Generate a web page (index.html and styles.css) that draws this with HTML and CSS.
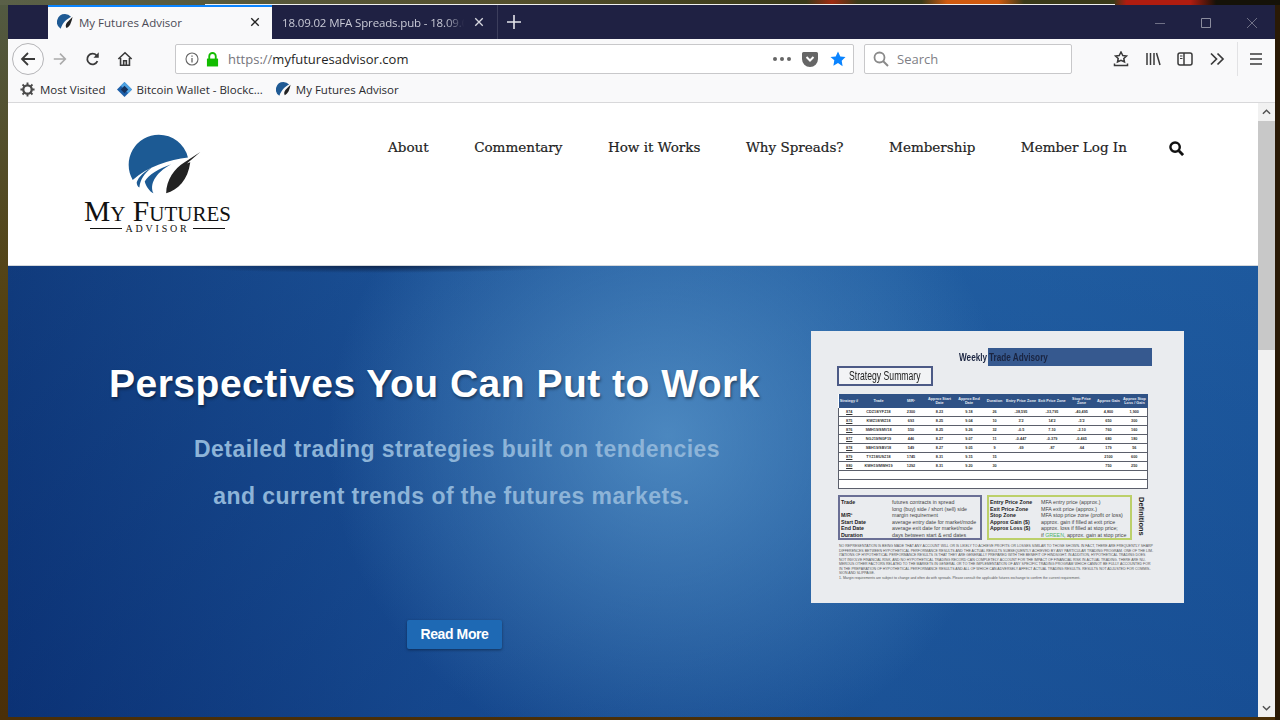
FILE: index.html
```html
<!DOCTYPE html>
<html lang="en">
<head>
    <meta charset="UTF-8">
    <title>My Futures Advisor</title>
    <link rel="stylesheet" href="styles.css">
</head>
<body>

<div class="desktop-top"><div class="desktop-line"></div></div>

<div class="window">
    <div class="tabbar">
        <div class="tab tab-active">
            <svg class="favicon" viewBox="0 0 16 16"><path fill="#1f5a94" d="M8 0a8 8 0 0 1 6 2.7C10 5 6 8 3.6 14.7A8 8 0 0 1 8 0z"/><path fill="#222" d="M15.5 3 10 8.500c-1.500 2-1.600 4-.6 5.500 3-1 5-5 6.100-11z"/></svg>
            <span class="tab-title">My Futures Advisor</span>
            <svg class="tab-close" viewBox="0 0 12 12"><path d="M1.500 1.500l9 9M10.500 1.500l-9 9" stroke="#222" stroke-width="1.600"/></svg>
        </div>
        <div class="tab tab-other">
            <span class="tab-title">18.09.02 MFA Spreads.pub - 18.09.0</span>
            <svg class="tab-close" viewBox="0 0 12 12"><path d="M1.500 1.500l9 9M10.500 1.500l-9 9" stroke="#d8d8e0" stroke-width="1.600"/></svg>
        </div>
        <div class="new-tab">
            <svg viewBox="0 0 14 14"><path d="M7 0v14M0 7h14" stroke="#e4e4ea" stroke-width="1.600"/></svg>
        </div>
        <div class="window-buttons">
            <svg viewBox="0 0 12 12"><path d="M1 6.500h10" stroke="#6f7086"/></svg>
            <svg viewBox="0 0 12 12"><path d="M1.500 1.500h9v9h-9z" fill="none" stroke="#8b8c9e"/></svg>
            <svg viewBox="0 0 12 12"><path d="M1 1l10 10M11 1L1 11" stroke="#6f7086"/></svg>
        </div>
    </div>

    <div class="toolbar">
        <div class="back-button">
            <svg viewBox="0 0 18 18"><path d="M16 9H3M9 3L3 9l6 6" fill="none" stroke="#3a3a3a" stroke-width="1.800"/></svg>
        </div>
        <svg class="tool-icon forward" viewBox="0 0 18 18"><path d="M2 9h13M9 3l6 6-6 6" fill="none" stroke="#ababab" stroke-width="1.800"/></svg>
        <svg class="tool-icon reload" viewBox="0 0 18 18"><path d="M14 11.500A6 6 0 1 1 13 5" fill="none" stroke="#3a3a3a" stroke-width="2"/><path d="M15.500 1.500v6h-6z" fill="#3a3a3a"/></svg>
        <svg class="tool-icon home" viewBox="0 0 18 18"><path d="M1.500 9 9 2l7.500 7M4 8v8h10V8M7.500 16v-5h3v5" fill="none" stroke="#3a3a3a" stroke-width="1.800"/></svg>

        <div class="urlbar">
            <svg class="url-info" viewBox="0 0 14 14"><circle cx="7" cy="7" r="6" fill="none" stroke="#666" stroke-width="1.100"/><path d="M7 6v4.500M7 3.500v1.300" stroke="#666" stroke-width="1.300"/></svg>
            <svg class="url-lock" viewBox="0 0 14 16"><path d="M1 7h12v8.500H1z" fill="#12bc00"/><path d="M3.500 7.500V4.500a3.500 3.500 0 0 1 7 0v3" fill="none" stroke="#12bc00" stroke-width="2"/></svg>
            <span class="url-text"><span class="url-scheme">https://</span>myfuturesadvisor.com</span>
            <span class="url-dots"><i></i><i></i><i></i></span>
            <svg class="url-pocket" viewBox="0 0 16 15"><path d="M1.500 0h13A1.500 1.500 0 0 1 16 1.500V7A8 8 0 0 1 0 7V1.500A1.500 1.500 0 0 1 1.500 0z" fill="#666"/><path d="M4.500 5 8 8.500 11.500 5" fill="none" stroke="#fff" stroke-width="2"/></svg>
            <svg class="url-star" viewBox="0 0 16 16"><path d="M8 .5l2.300 4.900 5.200.7-3.800 3.700.9 5.400L8 12.100l-4.600 2.600.9-5.400L.5 6.100l5.200-.7z" fill="#0a84ff"/></svg>
        </div>

        <div class="searchbar">
            <svg viewBox="0 0 16 16"><circle cx="6.500" cy="6.500" r="5" fill="none" stroke="#8a8a8a" stroke-width="1.800"/><path d="M10 10l5 5" stroke="#8a8a8a" stroke-width="2"/></svg>
            <span>Search</span>
        </div>

        <div class="tool-right">
            <svg viewBox="0 0 16 16"><path d="M8 1l1.800 3.500 3.700.5-2.700 2.500.7 3.500L8 9.300 4.500 11l.7-3.500L2.500 5l3.700-.5z" fill="none" stroke="#3a3a3a" stroke-width="1.500"/><path d="M1.500 12.500v2h13v-2" fill="none" stroke="#3a3a3a" stroke-width="1.500"/></svg>
            <svg viewBox="0 0 16 16"><path d="M2 2v12M5.500 2v12M9 2v12M11.500 2l3.500 12" fill="none" stroke="#3a3a3a" stroke-width="1.500"/></svg>
            <svg viewBox="0 0 16 16"><rect x="1" y="2" width="14" height="12" rx="2" fill="none" stroke="#3a3a3a" stroke-width="1.500"/><path d="M7 2v12" stroke="#3a3a3a" stroke-width="1.500"/><path d="M3 5h2.500M3 7.500h2.500" stroke="#3a3a3a"/></svg>
            <svg viewBox="0 0 16 16"><path d="M2 2.500 7.500 8 2 13.500M8.500 2.500 14 8l-5.500 5.500" fill="none" stroke="#3a3a3a" stroke-width="1.700"/></svg>
            <span class="tool-sep"></span>
            <svg viewBox="0 0 16 16"><path d="M2 3h12M2 8h12M2 13h12" stroke="#3a3a3a" stroke-width="1.700"/></svg>
        </div>
    </div>

    <div class="bookmarks">
        <div class="bookmark">
            <svg viewBox="0 0 16 16"><circle cx="8" cy="8" r="4.500" fill="none" stroke="#4a4a4a" stroke-width="2.400"/><path d="M8 .5v3M8 12.500v3M.5 8h3M12.500 8h3M2.700 2.700l2 2M11.300 11.300l2 2M13.300 2.700l-2 2M4.700 11.300l-2 2" stroke="#4a4a4a" stroke-width="2"/></svg>
            Most Visited
        </div>
        <div class="bookmark">
            <svg viewBox="0 0 16 16"><path d="M8 0l8 8-8 8-8-8z" fill="#1d5fa8"/><path d="M8 0l8 8-4 4-8-8z" fill="#4fa3e3"/><path d="M8 4l4 4-4 4-4-4z" fill="#17325c"/></svg>
            Bitcoin Wallet - Blockc...
        </div>
        <div class="bookmark">
            <svg viewBox="0 0 16 16"><path fill="#1f5a94" d="M8 0a8 8 0 0 1 6 2.700C10 5 6 8 3.600 14.700A8 8 0 0 1 8 0z"/><path fill="#222" d="M15.500 3 10 8.500c-1.500 2-1.600 4-.6 5.500 3-1 5-5 6.100-11z"/></svg>
            My Futures Advisor
        </div>
    </div>

    <div class="viewport">
        <div class="page">
            <header class="site-header">
                <div class="logo">
                    <svg class="logo-mark" viewBox="170 25 230 185">
                        <path fill="#1c5a94" d="M268 30A90 90 0 0 1 355 98C300 105 235 125 190 165A90 90 0 0 1 268 30z"/>
                        <path fill="#1c5a94" d="M247 128C225 140 208 155 202 172c0 8 3 13 8 16C212 165 225 145 247 128z"/>
                        <path fill="#1c5a94" d="M305 118C270 130 235 150 226 170c4 15 14 30 26 35C240 180 255 145 305 118z"/>
                        <path fill="#222" d="M392 82 345 112C315 130 290 165 290 205 325 195 355 165 362 112L352 116z"/>
                    </svg>
                    <div class="logo-name">My Futures</div>
                    <div class="logo-sub"><span></span>Advisor<span></span></div>
                </div>
                <nav class="site-nav">
                    <a>About</a>
                    <a>Commentary</a>
                    <a>How it Works</a>
                    <a>Why Spreads?</a>
                    <a>Membership</a>
                    <a>Member Log In</a>
                    <svg class="nav-search" viewBox="0 0 16 16"><circle cx="6.500" cy="6.500" r="5" fill="none" stroke="#111" stroke-width="2.600"/><path d="M10.500 10.500 15 15" stroke="#111" stroke-width="3"/></svg>
                </nav>
            </header>

            <section class="hero">
                <div class="hero-copy">
                    <h1>Perspectives You Can Put to Work</h1>
                    <p class="hero-line">Detailed trading strategies built on tendencies</p>
                    <p class="hero-line">and current trends of the futures markets.</p>
                    <a class="read-more">Read More</a>
                </div>

                <div class="sheet">
                    <div class="sheet-title"><span class="sheet-weekly"><i>Weekly</i></span><span class="sheet-band"><i>Trade Advisory</i></span></div>
                    <div class="sheet-summary"><i>Strategy Summary</i></div>
                    <table class="sheet-table">
                        <thead>
                            <tr><th>Strategy #</th><th>Trade</th><th>M/R¹</th><th>Approx Start Date</th><th>Approx End Date</th><th>Duration</th><th>Entry Price Zone</th><th>Exit Price Zone</th><th>Stop Price Zone</th><th>Approx Gain</th><th>Approx Stop Loss / Gain</th></tr>
                        </thead>
                        <tbody>
                            <tr><td><u>874</u></td><td>CDZ18/YFZ18</td><td>2300</td><td>8.23</td><td>9.18</td><td>26</td><td>-38,595</td><td>-33,795</td><td>-40,495</td><td>4,800</td><td>1,900</td></tr>
                            <tr><td><u>875</u></td><td>KWZ18/WZ18</td><td>693</td><td>8.25</td><td>9.04</td><td>10</td><td>3'2</td><td>14'2</td><td>-5'2</td><td>650</td><td>300</td></tr>
                            <tr><td><u>876</u></td><td>SMH19/SMV18</td><td>550</td><td>8.25</td><td>9.26</td><td>32</td><td>-0.5</td><td>7.10</td><td>-2.10</td><td>760</td><td>160</td></tr>
                            <tr><td><u>877</u></td><td>NGJ19/NGF19</td><td>446</td><td>8.27</td><td>9.07</td><td>11</td><td>-0.447</td><td>-0.379</td><td>-0.465</td><td>680</td><td>180</td></tr>
                            <tr><td><u>878</u></td><td>SBH19/SBV18</td><td>549</td><td>8.27</td><td>9.05</td><td>9</td><td>.69</td><td>.87</td><td>.64</td><td>179</td><td>56</td></tr>
                            <tr><td><u>879</u></td><td>TYZ18/USZ18</td><td>1745</td><td>8.31</td><td>9.15</td><td>15</td><td></td><td></td><td></td><td>2100</td><td>600</td></tr>
                            <tr><td><u>880</u></td><td>KWH19/MWH19</td><td>1292</td><td>8.31</td><td>9.20</td><td>30</td><td></td><td></td><td></td><td>750</td><td>250</td></tr>
                            <tr><td colspan="11">&nbsp;</td></tr>
                            <tr><td colspan="11">&nbsp;</td></tr>
                        </tbody>
                    </table>

                    <div class="legend">
                        <dl class="legend-box legend-left">
                            <dt>Trade</dt><dd>futures contracts in spread</dd>
                            <dt>&nbsp;</dt><dd>long (buy) side / short (sell) side</dd>
                            <dt>M/R¹</dt><dd>margin requirement</dd>
                            <dt>Start Date</dt><dd>average entry date for market/mode</dd>
                            <dt>End Date</dt><dd>average exit date for market/mode</dd>
                            <dt>Duration</dt><dd>days between start &amp; end dates</dd>
                        </dl>
                        <dl class="legend-box legend-right">
                            <dt>Entry Price Zone</dt><dd>MFA entry price (approx.)</dd>
                            <dt>Exit Price Zone</dt><dd>MFA exit price (approx.)</dd>
                            <dt>Stop Zone</dt><dd>MFA stop price zone (profit or loss)</dd>
                            <dt>Approx Gain ($)</dt><dd>approx. gain if filled at exit price</dd>
                            <dt>Approx Loss ($)</dt><dd>approx. loss if filled at stop price;</dd>
                            <dt>&nbsp;</dt><dd>if <em>GREEN</em>, approx. gain at stop price</dd>
                        </dl>
                        <div class="legend-side">Definitions</div>
                    </div>

                    <p class="disclaimer">NO REPRESENTATION IS BEING MADE THAT ANY ACCOUNT WILL OR IS LIKELY TO ACHIEVE PROFITS OR LOSSES SIMILAR TO THOSE SHOWN. IN FACT, THERE ARE FREQUENTLY SHARP<br>DIFFERENCES BETWEEN HYPOTHETICAL PERFORMANCE RESULTS AND THE ACTUAL RESULTS SUBSEQUENTLY ACHIEVED BY ANY PARTICULAR TRADING PROGRAM. ONE OF THE LIM-<br>ITATIONS OF HYPOTHETICAL PERFORMANCE RESULTS IS THAT THEY ARE GENERALLY PREPARED WITH THE BENEFIT OF HINDSIGHT. IN ADDITION, HYPOTHETICAL TRADING DOES<br>NOT INVOLVE FINANCIAL RISK, AND NO HYPOTHETICAL TRADING RECORD CAN COMPLETELY ACCOUNT FOR THE IMPACT OF FINANCIAL RISK IN ACTUAL TRADING. THERE ARE NU-<br>MEROUS OTHER FACTORS RELATED TO THE MARKETS IN GENERAL OR TO THE IMPLEMENTATION OF ANY SPECIFIC TRADING PROGRAM WHICH CANNOT BE FULLY ACCOUNTED FOR<br>IN THE PREPARATION OF HYPOTHETICAL PERFORMANCE RESULTS AND ALL OF WHICH CAN ADVERSELY AFFECT ACTUAL TRADING RESULTS. RESULTS NOT ADJUSTED FOR COMMIS-<br>SION AND SLIPPAGE.<br>1. Margin requirements are subject to change and often do with spreads. Please consult the applicable futures exchange to confirm the current requirement.</p>
                </div>
            </section>
        </div>

        <div class="scrollbar">
            <svg class="scroll-arrow" viewBox="0 0 10 6"><path d="M1 5l4-4 4 4" fill="none" stroke="#505050" stroke-width="1.600"/></svg>
            <div class="scroll-thumb"></div>
            <div class="scroll-rest"></div>
            <svg class="scroll-arrow" viewBox="0 0 10 6"><path d="M1 1l4 4 4-4" fill="none" stroke="#505050" stroke-width="1.600"/></svg>
        </div>
    </div>
</div>

</body>
</html>
```

FILE: styles.css
```css
html, body {
    height: 100%;
    margin: 0;
    padding: 0;
}

body {
    display: flex;
    flex-direction: column;
    height: 720px;
    overflow: hidden;
    background:
        linear-gradient(90deg, transparent 1275px, #2a1a06 1275px),
        linear-gradient(180deg, #525a42 0, #54400f 45%, #4a2f08 100%);
    font-family: 'Open Sans', 'Noto Sans', sans-serif;
}

.desktop-top {
    flex: 0 0 5px;
    display: flex;
    flex-direction: column;
    justify-content: flex-end;
    background: linear-gradient(90deg, #5a6048 0, #54502c 40%, #3a3a18 62%, #3a3a18 63%, #a02a10 65%, #3a3a18 67%, #3a3a18 72%, #d05a10 74%, #d05a10 78%, #3a3a18 80%, #3a3a18 87%, #b01c10 88%, #b01c10 93%, #151208 95%);
}

.desktop-line {
    height: 1px;
    width: 910px;
    margin-left: 205px;
    background-color: #f0f0f0;
}

.window {
    flex: 1;
    min-height: 0;
    margin: 0 5px 3px 8px;
    display: flex;
    flex-direction: column;
}

/* Browser chrome */

.tabbar {
    flex: 0 0 34px;
    display: flex;
    background-color: #1f2143;
}

.tab {
    display: flex;
    align-items: center;
    box-sizing: border-box;
    font-size: 11.500px;
}

.tab-active {
    width: 224px;
    margin-left: 40px;
    padding: 0 12px 2px 9px;
    background-color: #f9f9fa;
    border-top: 2px solid #0a84ff;
    color: #4a4a55;
}

.tab-other {
    width: 226px;
    padding: 0 13px 0 10px;
    border-right: 1px solid #3c3e5c;
    color: #c9cad6;
}

.tab-title {
    flex: 1;
    min-width: 0;
    white-space: nowrap;
}

.tab-other .tab-title {
    letter-spacing: -0.15px;
    -webkit-mask-image: linear-gradient(90deg, #000 88%, transparent 98%);
    mask-image: linear-gradient(90deg, #000 88%, transparent 98%);
}

.favicon {
    flex: 0 0 16px;
    height: 16px;
    margin-right: 6px;
}

.tab-close {
    flex: 0 0 10px;
    height: 10px;
    margin-left: 6px;
}

.new-tab {
    padding: 10px 0 0 9px;
}

.new-tab svg {
    display: block;
    width: 14px;
    height: 14px;
}

.window-buttons {
    margin-left: auto;
    display: flex;
    gap: 34px;
    padding: 12px 17px 0 0;
}

.window-buttons svg {
    width: 12px;
    height: 12px;
}

.toolbar {
    flex: 0 0 40px;
    display: flex;
    align-items: center;
    background-color: #f9f9fa;
}

.back-button {
    flex: 0 0 32px;
    height: 32px;
    margin-left: 4px;
    box-sizing: border-box;
    border: 1px solid #b5b5b8;
    border-radius: 50%;
    background-color: #fbfbfc;
    display: flex;
    align-items: center;
    justify-content: center;
}

.back-button svg {
    width: 18px;
    height: 18px;
}

.tool-icon {
    width: 16px;
    height: 16px;
}

.forward {
    margin-left: 8px;
}

.reload {
    margin-left: 17px;
}

.home {
    margin-left: 16px;
}

.urlbar {
    width: 679px;
    height: 30px;
    margin-left: 42px;
    box-sizing: border-box;
    display: flex;
    align-items: center;
    background-color: #fff;
    border: 1px solid #c8c8ca;
    border-radius: 2px;
    font-size: 13px;
    color: #1f1f24;
    padding: 0 7px 0 9px;
}

.url-info {
    width: 14px;
    height: 14px;
}

.url-lock {
    width: 13px;
    height: 15px;
    margin-left: 7px;
}

.url-text {
    margin-left: 9px;
    flex: 1;
}

.url-scheme {
    color: #75757c;
}

.url-dots {
    display: flex;
    gap: 3px;
}

.url-dots i {
    width: 4px;
    height: 4px;
    border-radius: 50%;
    background-color: #666;
}

.url-pocket {
    width: 16px;
    height: 15px;
    margin-left: 11px;
}

.url-star {
    width: 16px;
    height: 16px;
    margin-left: 12px;
}

.searchbar {
    width: 208px;
    height: 30px;
    margin-left: 10px;
    box-sizing: border-box;
    display: flex;
    align-items: center;
    gap: 8px;
    padding-left: 8px;
    background-color: #fff;
    border: 1px solid #c8c8ca;
    border-radius: 2px;
    font-size: 13px;
    color: #808086;
}

.searchbar svg {
    width: 16px;
    height: 16px;
}

.tool-right {
    display: flex;
    align-items: center;
    gap: 16px;
    margin-left: 41px;
}

.tool-right svg {
    width: 16px;
    height: 16px;
}

.tool-sep {
    width: 1px;
    height: 34px;
    margin: 0 -6px 0 -4px;
    background-color: #e2e2e4;
}

.bookmarks {
    flex: 0 0 24px;
    display: flex;
    align-items: flex-start;
    gap: 11px;
    padding-left: 12px;
    box-sizing: border-box;
    background-color: #f9f9fa;
    border-bottom: 1px solid #d8d8da;
    font-size: 11.500px;
    color: #2b2b2f;
}

.bookmark {
    display: flex;
    align-items: center;
    gap: 5px;
    height: 20px;
    white-space: nowrap;
}

.bookmark:last-child {
    margin-left: 2px;
}

.bookmark svg {
    width: 15px;
    height: 15px;
}

/* Page */

.viewport {
    flex: 1;
    min-height: 0;
    display: flex;
}

.page {
    flex: 1;
    min-width: 0;
    display: flex;
    flex-direction: column;
    background-color: #fff;
}

.site-header {
    flex: 0 0 163px;
    display: flex;
    border-bottom: 1px solid #d4d8dc;
    box-sizing: border-box;
}

.logo {
    width: 151px;
    margin: 30px 0 0 74px;
    font-family: 'Liberation Serif', serif;
    color: #111;
    text-align: center;
}

.logo-mark {
    display: block;
    width: 77px;
    height: 62px;
    margin-left: 44px;
}

.logo-name {
    margin-top: 4px;
    font-size: 29.500px;
    line-height: 24px;
    font-variant: small-caps;
    white-space: nowrap;
}

.logo-sub {
    display: flex;
    align-items: center;
    justify-content: center;
    gap: 3px;
    font-size: 10px;
    line-height: 11px;
    letter-spacing: 2.800px;
    text-transform: uppercase;
}

.logo-sub span {
    width: 32px;
    height: 1px;
    background-color: #111;
}

.site-nav {
    margin-left: 155px;
    padding-top: 34px;
    display: flex;
    align-items: flex-start;
    gap: 45.500px;
    font-family: 'DejaVu Serif', serif;
    font-size: 13.500px;
    line-height: 20px;
    color: #222;
    -webkit-text-stroke: 0.2px #222;
}

.site-nav a {
    white-space: nowrap;
}

.nav-search {
    width: 15px;
    height: 15px;
    margin: 4px 0 0 -3.500px;
}

/* Hero */

.hero {
    flex: 1;
    min-height: 0;
    display: flex;
    background-color: #1a4f90;
    background-image:
        radial-gradient(ellipse 200px 7px at 367px 0, rgba(10, 25, 55, 0.75), rgba(10, 25, 55, 0) 100%),
        radial-gradient(ellipse 340px 330px at 660px 170px, rgba(98, 160, 210, 0.68), rgba(98, 160, 210, 0) 100%),
        linear-gradient(180deg, rgba(30, 85, 150, 0.25) 0, rgba(10, 50, 120, 0.3) 100%),
        linear-gradient(90deg, #0c3274 0, #1a5096 35%, #2260a4 70%, #1d5aa0 100%);
    font-family: 'Liberation Sans', Arial, sans-serif;
}

.hero-copy {
    width: 803px;
    display: flex;
    flex-direction: column;
    align-items: center;
    padding-top: 94px;
    box-sizing: border-box;
}

.hero-copy h1 {
    margin: 0;
    padding-left: 50px;
    font-size: 39px;
    line-height: 48px;
    font-weight: bold;
    color: #fff;
    letter-spacing: 0.5px;
    text-shadow: 1px 2px 3px rgba(0, 0, 0, 0.45);
    white-space: nowrap;
}

.hero-line {
    margin: 0;
    width: 100%;
    padding-left: 95px;
    box-sizing: border-box;
    text-align: center;
    font-size: 23px;
    line-height: 47px;
    font-weight: bold;
    letter-spacing: 0.45px;
    color: #8db4d8;
}

.hero-line:first-of-type {
    margin-top: 18px;
}

.hero-line + .hero-line {
    padding-left: 84px;
}

.read-more {
    margin: 100px 0 0 90px;
    width: 95px;
    height: 29px;
    box-sizing: border-box;
    text-align: center;
    font-size: 14px;
    line-height: 29px;
    font-weight: bold;
    letter-spacing: -0.4px;
    color: #fff;
    background-color: #1e69b4;
    border-radius: 2px;
    box-shadow: 0 1px 3px rgba(0, 0, 0, 0.4);
}

/* Advisory sheet */

.sheet {
    width: 373px;
    height: 272px;
    margin-top: 65px;
    padding: 17px 26px 0 26px;
    box-sizing: border-box;
    background-color: #eaecef;
    font-family: 'Liberation Sans', Arial, sans-serif;
    color: #222;
}

.sheet i {
    display: inline-block;
    font-style: normal;
    transform: scaleX(0.72);
    transform-origin: left center;
    white-space: nowrap;
}

.sheet-title {
    display: flex;
    padding-left: 122px;
    font-size: 10.500px;
    font-weight: bold;
    line-height: 18px;
    color: #1a2440;
}

.sheet-title i {
    transform: scaleX(0.78);
}

.sheet-weekly {
    width: 29px;
}

.sheet-band {
    width: 164px;
    padding-left: 1px;
    box-sizing: border-box;
    background-color: #36598f;
}

.sheet-summary {
    width: 96px;
    height: 20px;
    box-sizing: border-box;
    border: 2px solid #4c5a86;
    padding-left: 10px;
    font-size: 12px;
    line-height: 16px;
    background-color: #f2f3f5;
}

.sheet-table {
    width: 309px;
    margin: 8px 0 0 1px;
    border-collapse: collapse;
    table-layout: fixed;
    font-size: 3.800px;
    text-align: center;
    background-color: #fff;
}

.sheet-table th {
    height: 14px;
    padding: 0;
    line-height: 4.500px;
    background-color: #2f5286;
    color: #e4ebf4;
    font-weight: bold;
}

.sheet-table th:nth-child(1) { width: 21px; }
.sheet-table th:nth-child(2) { width: 38px; }
.sheet-table th:nth-child(3) { width: 27px; }
.sheet-table th:nth-child(4) { width: 30px; }
.sheet-table th:nth-child(5) { width: 29px; }
.sheet-table th:nth-child(6) { width: 22px; }
.sheet-table th:nth-child(7) { width: 31px; }
.sheet-table th:nth-child(8) { width: 31px; }
.sheet-table th:nth-child(9) { width: 28px; }
.sheet-table th:nth-child(10) { width: 26px; }
.sheet-table th:nth-child(11) { width: 26px; }

.sheet-table td {
    height: 8px;
    padding: 0;
    line-height: 4px;
    font-weight: bold;
    color: #333;
    border-bottom: 1px solid #5b5f6b;
}

.sheet-table tr td:first-child {
    border-left: 1px solid #5b5f6b;
}

.sheet-table tr td:last-child {
    border-right: 1px solid #5b5f6b;
}

.legend {
    display: flex;
    margin: 6px 0 0 1px;
}

.legend-box {
    margin: 0;
    height: 45px;
    box-sizing: border-box;
    padding: 2px 1px;
    display: grid;
    grid-auto-rows: 6.500px;
    font-size: 5.300px;
    line-height: 6.500px;
    white-space: nowrap;
    overflow: hidden;
    color: #444;
}

.legend-left {
    width: 144px;
    grid-template-columns: 51px 1fr;
    border: 2px solid #6a6f95;
}

.legend-right {
    width: 145px;
    margin-left: 5px;
    grid-template-columns: 51px 1fr;
    border: 2px solid #bcd06a;
}

.legend-box dt {
    font-weight: bold;
    color: #222;
}

.legend-box dd {
    margin: 0;
}

.legend-box em {
    font-style: normal;
    color: #4cb36a;
}

.legend-side {
    margin: 2px 0 0 5px;
    writing-mode: vertical-rl;
    font-size: 7.500px;
    font-weight: bold;
    line-height: 9px;
}

.disclaimer {
    margin: 4px 0 0 2px;
    font-size: 3.500px;
    line-height: 4.500px;
    color: #555;
    white-space: nowrap;
}

/* Scrollbar */

.scrollbar {
    flex: 0 0 17px;
    display: flex;
    flex-direction: column;
    background-color: #f1f1f1;
}

.scroll-arrow {
    flex: 0 0 6px;
    width: 9px;
    margin: 6px 4px;
}

.scroll-thumb {
    flex: 0 0 229px;
    background-color: #c8c8c8;
}

.scroll-rest {
    flex: 1;
}
```
